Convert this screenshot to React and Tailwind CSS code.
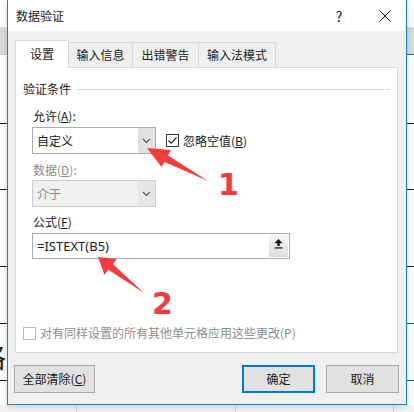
const Chevron = ({ color = "#555" }) => (
  <svg width="9" height="6" viewBox="0 0 9 6">
    <path d="M1 1 L4.5 4.5 L8 1" fill="none" stroke={color} strokeWidth="1.1" />
  </svg>
);

function Row({ h, bg = "bg-white", left = "border-transparent", right = "border-transparent", children }) {
  return (
    <div className={`flex ${bg}`} style={{ height: h }}>
      <div className={`w-[7px] border-b ${left} relative overflow-visible`}>{children}</div>
      <div className="flex-1" />
      <div className={`w-[8px] border-b ${right}`} />
    </div>
  );
}

function Combo({ text, disabled }) {
  return (
    <div
      className={`flex h-[27px] w-[124px] border ${
        disabled ? "border-[#cccccc] bg-[#f0f0f0] text-[#8d8d8d]" : "border-[#adadad] bg-white text-[#1a1a1a]"
      }`}
    >
      <span className="flex-1 pl-[4px] leading-[25px]">{text}</span>
      <span className={`flex w-[17px] items-center justify-center ${disabled ? "bg-[#e6e6e6]" : "bg-[#e1e1e1]"}`}>
        <Chevron />
      </span>
    </div>
  );
}

export default function App() {
  return (
    <div className="relative h-[412px] w-[414px] overflow-hidden bg-white font-['Noto_Sans_CJK_SC','Noto_Sans',sans-serif] text-[12px] text-[#1a1a1a]">
      {/* spreadsheet behind the dialog */}
      <div className="flex flex-col">
        <Row h={27} />
        <Row h={28} bg="bg-[#dadada]" left="border-[#c6c6c6]" right="border-[#217346]" />
        <Row h={69} left="border-[#222]" right="border-[#222]" />
        <Row h={66} left="border-[#222]" right="border-[#222]" />
        <Row h={77} left="border-[#222]" right="border-[#222]" />
        <Row h={57} left="border-[#222]" right="border-[#217346]" />
        <Row h={57} left="border-[#222]" right="border-[#217346]">
          <span className="absolute left-[-22px] top-[18px] text-[28px] leading-none text-[#222]">格</span>
        </Row>
        <div className="flex h-[24px] bg-white" />
        <div className="flex h-[8px] bg-[#f3f3f3]">
          <div className="w-[77px] border-r border-[#d4d4d4]" />
          <div className="w-[159px] border-r border-[#d4d4d4]" />
          <div className="w-[158px] border-r border-[#d4d4d4]" />
        </div>
      </div>

      {/* dialog */}
      <div className="absolute left-[7px] top-0 flex h-[405px] w-[400px] flex-col border-x border-b border-[#1c7fd4] bg-[#f0f0f0] shadow-[0_2px_6px_rgba(0,0,0,0.15)]">
        <div className="flex h-[31px] items-center bg-white pl-[8px] pr-[15px]">
          <span className="leading-none">数据验证</span>
          <span className="ml-auto w-[12px] text-center text-[14px] leading-none">?</span>
          <span className="ml-[34px] flex h-[12px] w-[12px] items-center justify-center">
            <svg width="12" height="12" viewBox="0 0 12 12">
              <path d="M0.5 0.5 L11.5 11.5 M11.5 0.5 L0.5 11.5" stroke="#111" strokeWidth="1" />
            </svg>
          </span>
        </div>

        <div className="ml-[7px] mt-[9px] flex items-end">
          <div className="relative z-10 -mb-px flex h-[28px] w-[54px] items-center justify-center border-x border-t border-[#d9d9d9] bg-white pb-[2px]">
            设置
          </div>
          <div className="flex h-[25px] w-[64px] items-center justify-center border-r border-t border-[#d9d9d9]">输入信息</div>
          <div className="flex h-[25px] w-[66px] items-center justify-center border-r border-t border-[#d9d9d9]">出错警告</div>
          <div className="flex h-[25px] w-[77px] items-center justify-center border-r border-t border-[#d9d9d9]">输入法模式</div>
        </div>

        <div className="ml-[7px] flex h-[286px] w-[383px] flex-col border border-[#d9d9d9] bg-white">
          <div className="ml-[7px] mr-[7px] mt-[13px] flex h-[16px] items-center">
            <span className="leading-[16px]">验证条件</span>
            <span className="ml-[5px] h-px flex-1 bg-[#dcdcdc]" />
          </div>

          <div className="flex flex-col pl-[16px]">
            <span className="ml-px mt-[11px] h-[16px] leading-[16px]">
              允许(<u>A</u>):
            </span>
            <div className="mt-[3px] flex items-center">
              <Combo text="自定义" />
              <span className="ml-[10px] flex h-[13px] w-[13px] items-center justify-center border border-[#333] bg-white">
                <svg width="11" height="11" viewBox="0 0 11 11">
                  <path d="M1.5 5.5 L4.2 8.2 L9.5 2.5" fill="none" stroke="#222" strokeWidth="1.2" />
                </svg>
              </span>
              <span className="ml-[4px] leading-[16px]">
                忽略空值(<u>B</u>)
              </span>
            </div>
            <span className="ml-px mt-[8px] h-[16px] leading-[16px] text-[#8d8d8d]">
              数据(<u>D</u>):
            </span>
            <div className="mt-[2px]">
              <Combo text="介于" disabled />
            </div>
            <span className="ml-px mt-[7px] h-[16px] leading-[16px]">
              公式(<u>F</u>)
            </span>
            <div className="mt-[3px] flex h-[26px] w-[258px] items-center border border-[#adadad] bg-white">
              <span className="flex-1 pl-[4px] font-['Noto_Sans',sans-serif] text-[13px] leading-[24px]">=ISTEXT(B5)</span>
              <span className="mr-px flex h-[22px] w-[19px] justify-center bg-linear-to-b from-[#f6f6f6] to-[#dcdcdc] pt-[4px]">
                <svg width="9" height="10" viewBox="0 0 9 10">
                  <path d="M4.5 0 L0.5 4.2 L3.3 4.2 L3.3 7 L5.7 7 L5.7 4.2 L8.5 4.2 Z" fill="#111" />
                  <rect x="0.5" y="8.3" width="8" height="1.2" fill="#111" />
                </svg>
              </span>
            </div>
          </div>

          <div className="ml-[7px] mt-[66px] flex items-center">
            <span className="h-[13px] w-[13px] border border-[#bcbcbc] bg-white" />
            <span className="ml-[4px] leading-[16px] text-[#8d8d8d]">对有同样设置的所有其他单元格应用这些更改(P)</span>
          </div>
        </div>

        <div className="mt-[12px] flex">
          <button className="ml-[6px] h-[28px] w-[81px] border border-[#adadad] bg-[#e1e1e1]">
            全部清除(<u>C</u>)
          </button>
          <button className="ml-auto h-[28px] w-[73px] border-2 border-[#0078d7] bg-[#e1e1e1]">确定</button>
          <button className="ml-[11px] mr-[7px] h-[28px] w-[73px] border border-[#adadad] bg-[#e1e1e1]">取消</button>
        </div>
      </div>

      {/* red annotation arrows */}
      <svg className="pointer-events-none absolute left-0 top-0" width="414" height="412">
        <polygon points="147,148 171,150 168,155.5 208,181 164.5,162 161.5,167" fill="#f53b3b" />
        <polygon points="98,257 116.8,259 112.8,264.1 144,293 108.4,269.7 104.4,274.8" fill="#f53b3b" />
      </svg>
      <span className="pointer-events-none absolute left-[218px] top-[170px] font-['DejaVu_Sans',sans-serif] text-[30px] font-bold leading-none text-[#f53b3b]">
        1
      </span>
      <span className="pointer-events-none absolute left-[152px] top-[289px] font-['DejaVu_Sans',sans-serif] text-[30px] font-bold leading-none text-[#f53b3b]">
        2
      </span>
    </div>
  );
}
